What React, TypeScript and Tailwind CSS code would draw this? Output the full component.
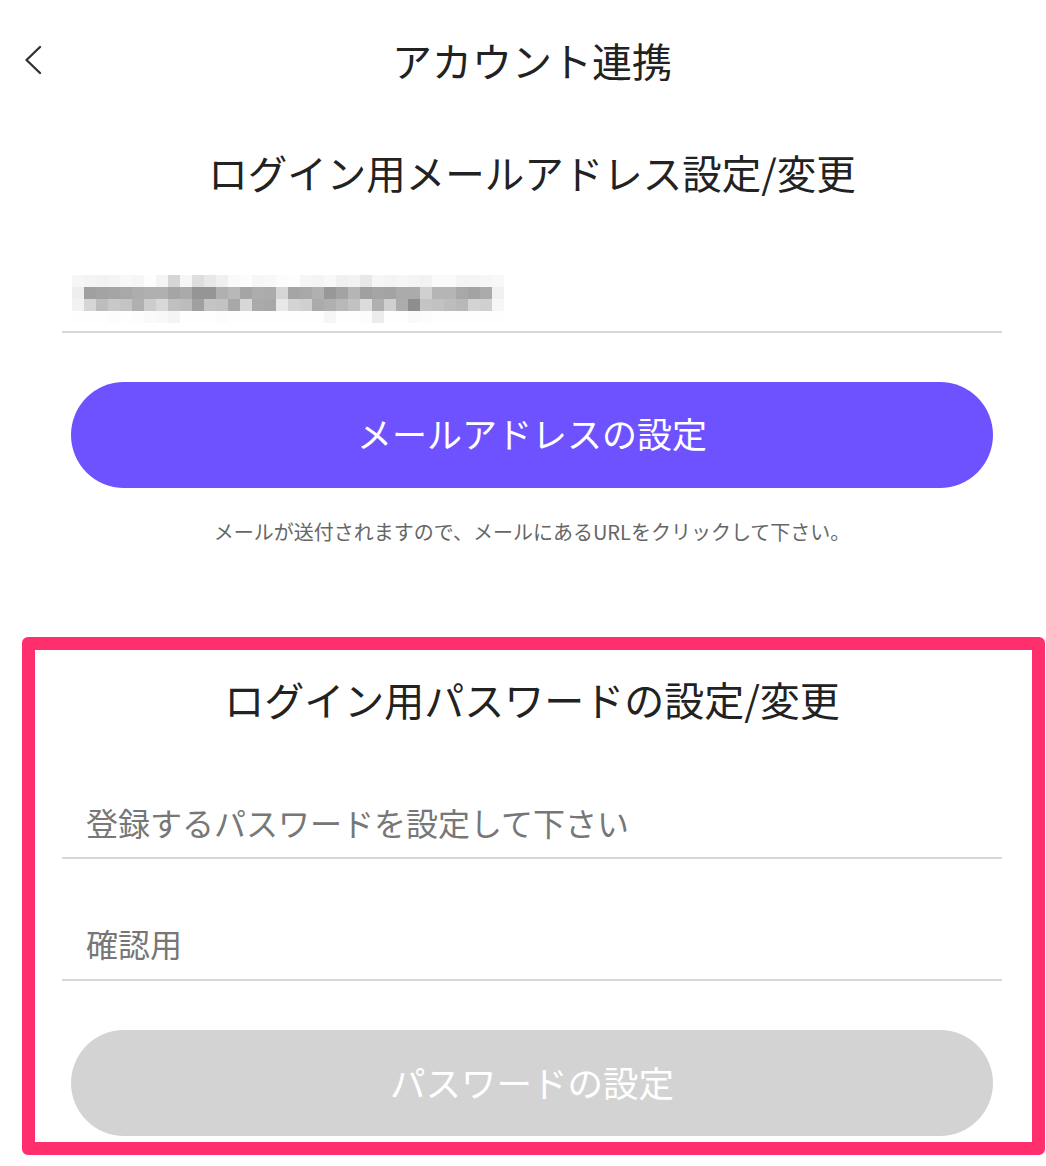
import { useState } from "react";

// pixelated (mosaic) email, one hex gray per 12px cell
const MOSAIC = [
  "f6f4f2f4f8f6fef4d6f6dee8f0fafcf6f8fcfef6f4f8f0f2e8f6f4f6f4f2fafaf4f4f6f8",
  "eea0a3a5a8adb0b0a5aa9595b0b8a5adabd5a5a8b098a3b5a0a5a3ababd0b5b5a8a3abf0",
  "f2d6bdc8c4b0ccd8c0bca0c4c2a8d8aaa8e8d4d0abb0b8c2dcb0d0ac8ec4c2bdb8d4d0f6",
  "fefefefcfefdfaf8f4fefefefcfefefefefefefefef6fefefcecfefefafcfefefefefefe",
];

const grays = (row: string) =>
  row.match(/.{2}/g)!.map((h) => `#${h}${h}${h}`);

function Mosaic() {
  return (
    <div className="flex flex-col ml-[10px]">
      {MOSAIC.map((row, r) => (
        <div key={r} className="flex h-[12px]">
          {grays(row).map((c, i) => (
            <div key={i} className="w-[12px] h-full" style={{ backgroundColor: c }} />
          ))}
        </div>
      ))}
    </div>
  );
}

function App() {
  const [password, setPassword] = useState("");
  const [confirm, setConfirm] = useState("");

  return (
    <div
      className="w-[1046px] min-h-[1166px] bg-white overflow-hidden"
      style={{ fontFamily: '"Noto Sans CJK JP", "Noto Sans", sans-serif' }}
    >
      <div className="w-[1064px]">
        <div className="h-[120px] grid grid-cols-[60px_1fr_60px] items-center">
          <button className="pl-[24px] h-full flex items-center">
            <svg width="18" height="30" viewBox="0 0 18 30" fill="none">
              <path
                d="M16 2 L2.5 15 L16 28"
                stroke="#333"
                strokeWidth="2.4"
                strokeLinecap="round"
                strokeLinejoin="round"
              />
            </svg>
          </button>
          <h1 className="text-center text-[40px] text-[#222] leading-none">
            アカウント連携
          </h1>
          <div />
        </div>

        <h2 className="h-[104px] flex items-center justify-center text-[39.5px] text-[#222]">
          ログイン用メールアドレス設定/変更
        </h2>

        <div className="mx-[62px] h-[109px] pt-[51px] border-b-2 border-[#d4d6da]">
          <Mosaic />
        </div>

        <button className="mt-[49px] mx-[71px] w-[922px] h-[106px] rounded-full bg-[#6e52ff] text-white text-[35px] flex items-center justify-center pb-[3px]">
          メールアドレスの設定
        </button>

        <p className="mt-[30px] text-center text-[20px] leading-[28px] text-[#666]">
          メールが送付されますので、メールにあるURLをクリックして下さい。
        </p>

        <section className="relative mt-[91px] pb-[19px]">
          <h2 className="h-[124px] flex items-center justify-center text-[40px] text-[#222]">
            ログイン用パスワードの設定/変更
          </h2>

          <div className="mx-[62px] h-[98px] pt-[26px] border-b-2 border-[#d4d6da] flex">
            <input
              type="password"
              value={password}
              onChange={(e) => setPassword(e.target.value)}
              placeholder="登録するパスワードを設定して下さい"
              className="w-full pl-[24px] text-[32px] outline-none placeholder:text-[#777] bg-transparent"
            />
          </div>
          <div className="mx-[62px] h-[122px] pt-[48px] border-b-2 border-[#d4d6da] flex">
            <input
              type="password"
              value={confirm}
              onChange={(e) => setConfirm(e.target.value)}
              placeholder="確認用"
              className="w-full pl-[24px] text-[32px] outline-none placeholder:text-[#777] bg-transparent"
            />
          </div>

          <button
            disabled={!password || password !== confirm}
            className="mt-[49px] mx-[71px] w-[922px] h-[106px] rounded-full bg-[#d3d3d3] text-white text-[35.5px] flex items-center justify-center pb-[3px]"
          >
            パスワードの設定
          </button>

          {/* highlight annotation */}
          <div className="pointer-events-none absolute top-0 left-[22px] w-[1023px] h-[518px] border-[13px] border-[#ff2e6c] rounded-[6px]" />
        </section>
      </div>
    </div>
  );
}

export default App;
